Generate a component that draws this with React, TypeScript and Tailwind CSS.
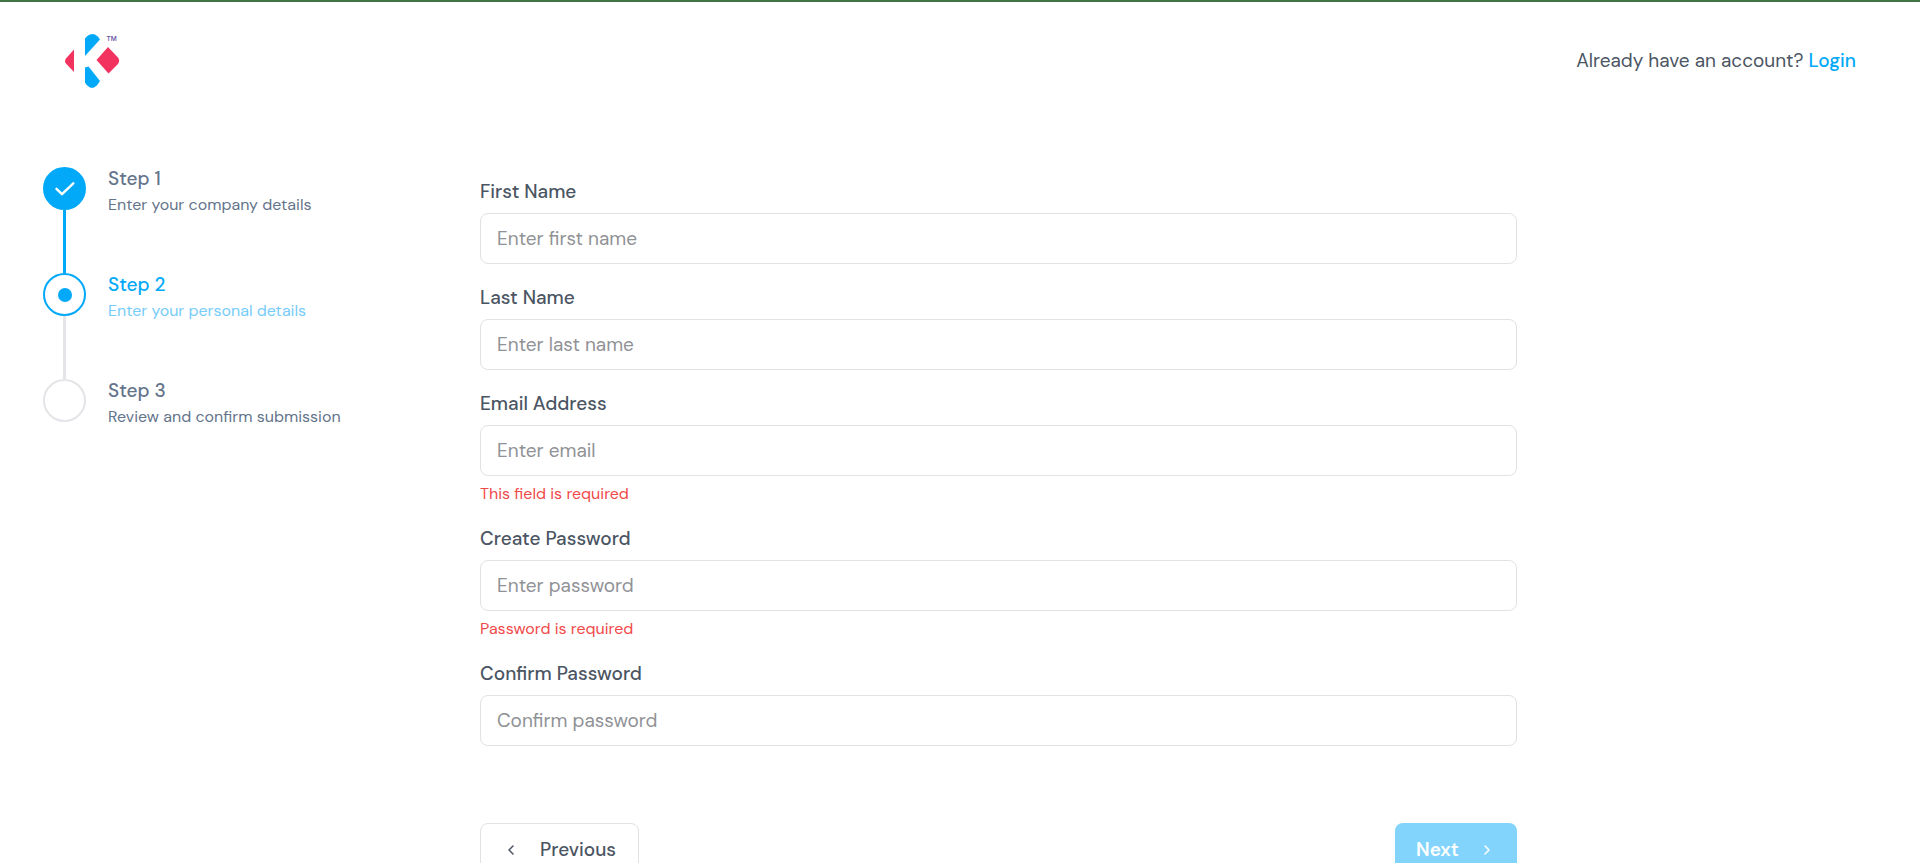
import { useState } from "react";

type StepState = "done" | "current" | "upcoming";

interface Step {
  title: string;
  detail: string;
  state: StepState;
}

const steps: Step[] = [
  { title: "Step 1", detail: "Enter your company details", state: "done" },
  { title: "Step 2", detail: "Enter your personal details", state: "current" },
  { title: "Step 3", detail: "Review and confirm submission", state: "upcoming" },
];

interface Field {
  id: string;
  label: string;
  placeholder: string;
  type: string;
  error?: string;
}

const fields: Field[] = [
  { id: "firstName", label: "First Name", placeholder: "Enter first name", type: "text" },
  { id: "lastName", label: "Last Name", placeholder: "Enter last name", type: "text" },
  { id: "email", label: "Email Address", placeholder: "Enter email", type: "email", error: "This field is required" },
  { id: "password", label: "Create Password", placeholder: "Enter password", type: "password", error: "Password is required" },
  { id: "confirmPassword", label: "Confirm Password", placeholder: "Confirm password", type: "password" },
];

const circleStyles: Record<StepState, string> = {
  done: "border-[#03a9f9] bg-[#03a9f9]",
  current: "border-[#03a9f9] bg-white",
  upcoming: "border-[#e4e4e9] bg-white",
};

const lineStyles: Record<StepState, string> = {
  done: "bg-[#03a9f9]",
  current: "bg-[#e4e4e9]",
  upcoming: "bg-[#e4e4e9]",
};

function Logo() {
  return (
    <svg viewBox="0 0 56 56" className="size-14" role="img" aria-label="Company logo">
      <path d="M10 16.500V39L2.200 30.800Q-0.200 28 2.200 25.200Z" fill="#f2335f" />
      <path d="M21 23V5.500Q23 2.500 26 1.400Q28.500 0.500 31 1.400Q34 2.600 36 6.500Z" fill="#03a9f9" />
      <path d="M21 34.500L24.500 33.500L36 48Q33.500 52.600 30.500 54.200Q28 55.300 25.500 54.200Q22.500 52.800 21 49.500Z" fill="#03a9f9" />
      <path d="M44 14L54 24.500Q56.400 27.800 54 31L44.500 40.500L32.500 27Z" fill="#f2335f" />
      <text x="42.500" y="7.500" fontSize="6.500" fontWeight="500" fill="#5b4a9c" fontFamily="Inter, sans-serif">
        TM
      </text>
    </svg>
  );
}

function Check() {
  return (
    <svg viewBox="0 0 20 14" className="h-3.5 w-5" fill="none" stroke="#fff" strokeWidth="2.400" strokeLinecap="round" strokeLinejoin="round" aria-hidden="true">
      <path d="M1.500 6.800L7 12.200L18.300 1.300" />
    </svg>
  );
}

function Chevron({ direction }: { direction: "left" | "right" }) {
  return (
    <svg viewBox="0 0 6 10" className="h-2.5 w-1.5" fill="none" stroke="currentColor" strokeWidth="1.500" strokeLinecap="round" strokeLinejoin="round" aria-hidden="true">
      <path d={direction === "left" ? "M5 1L1 5L5 9" : "M1 1L5 5L1 9"} />
    </svg>
  );
}

function Stepper() {
  return (
    <ol>
      {steps.map((step, index) => (
        <li key={step.title} className="flex gap-[22px]" aria-current={step.state === "current" ? "step" : undefined}>
          <div className="flex flex-col items-center">
            <span className={`flex size-[43px] items-center justify-center rounded-full border-2 ${circleStyles[step.state]}`}>
              {step.state === "done" && <Check />}
              {step.state === "current" && <span className="size-3.5 rounded-full bg-[#03a9f9]" />}
            </span>
            {index < steps.length - 1 && <span className={`h-[63px] w-[3px] ${lineStyles[step.state]}`} />}
          </div>
          <div className={step.state === "current" ? "text-[#03a9f9]" : "text-[#64748b]"}>
            <h2 className="text-[19px] leading-6 font-medium">{step.title}</h2>
            <p className={`mt-[3px] text-base leading-[22px] ${step.state === "current" ? "text-[#76ccfa]" : ""}`}>{step.detail}</p>
          </div>
        </li>
      ))}
    </ol>
  );
}

export default function App() {
  const [values, setValues] = useState<Record<string, string>>({});

  return (
    <div className="min-h-screen border-t-2 border-[#3f7444] bg-white font-['DM_Sans',Inter,sans-serif] text-[#4b5563]">
      <header className="flex items-center justify-between px-16 pt-[31px]">
        <a href="#home">
          <Logo />
        </a>
        <p className="text-[19px] leading-7">
          Already have an account?{" "}
          <a href="#login" className="font-medium text-[#03a9f9]">
            Login
          </a>
        </p>
      </header>

      <main className="flex pt-[78px] pb-16">
        <aside className="w-1/4 pl-[43px]">
          <Stepper />
        </aside>

        <form className="w-[54%] pt-[11px]" onSubmit={(event) => event.preventDefault()} noValidate>
          <div className="flex flex-col gap-5">
            {fields.map((field) => (
              <div key={field.id} className="flex flex-col">
                <label htmlFor={field.id} className="text-[19px] leading-7 font-medium">
                  {field.label}
                </label>
                <input
                  id={field.id}
                  type={field.type}
                  placeholder={field.placeholder}
                  value={values[field.id] ?? ""}
                  onChange={(event) => setValues({ ...values, [field.id]: event.target.value })}
                  aria-invalid={field.error ? true : undefined}
                  aria-describedby={field.error ? `${field.id}-error` : undefined}
                  className="mt-[7px] h-[51px] rounded-lg border border-[#e1e2e4] px-4 text-[19px] placeholder:text-[#909296]"
                />
                {field.error && (
                  <p id={`${field.id}-error`} className="mt-1.5 text-base leading-[23px] text-[#f04a4a]">
                    {field.error}
                  </p>
                )}
              </div>
            ))}
          </div>

          <div className="mt-[77px] flex justify-between text-[19px] font-medium">
            <button type="button" className="flex h-[54px] items-center gap-[26px] rounded-lg border border-[#e1e2e4] pr-[22px] pl-[27px]">
              <Chevron direction="left" />
              Previous
            </button>
            <button type="submit" className="flex h-[54px] items-center gap-[25px] rounded-lg bg-[#82d4fc] pr-[27px] pl-[21px] font-semibold text-white">
              Next
              <Chevron direction="right" />
            </button>
          </div>
        </form>
      </main>
    </div>
  );
}
